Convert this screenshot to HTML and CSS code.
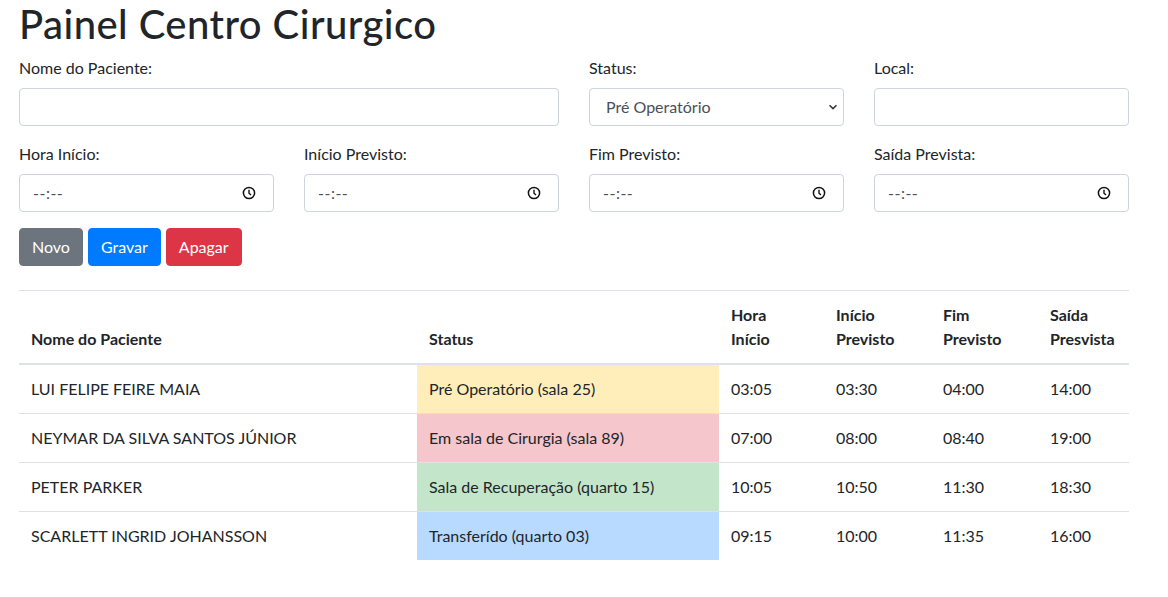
FILE: index.html
```html
<!DOCTYPE html>
<html lang="pt-BR">
<head>
<meta charset="utf-8">
<title>Painel Centro Cirurgico</title>
<link rel="stylesheet" href="styles.css">
</head>
<body>
<div class="container">
  <h1 class="title">Painel Centro Cirurgico</h1>
  <form class="form">
    <div class="form-row row-top">
      <div class="form-group">
        <label class="label">Nome do Paciente:</label>
        <div class="control"></div>
      </div>
      <div class="form-group">
        <label class="label">Status:</label>
        <div class="control select">
          <span>Pré Operatório</span>
          <svg class="chevron" width="10" height="8" viewBox="0 0 10 8"><path d="M1.5 2.2 L5 5.6 L8.5 2.2" fill="none" stroke="#343a40" stroke-width="1.6"/></svg>
        </div>
      </div>
      <div class="form-group">
        <label class="label">Local:</label>
        <div class="control"></div>
      </div>
    </div>
    <div class="form-row row-times">
      <div class="form-group">
        <label class="label">Hora Início:</label>
        <div class="control time"><span>--:--</span><svg class="clock" width="14" height="14" viewBox="0 0 14 14"><circle cx="7" cy="7" r="5.6" fill="none" stroke="#111" stroke-width="1.5"/><path d="M7 3.8 V7.2 L9 9" fill="none" stroke="#111" stroke-width="1.4"/></svg></div>
      </div>
      <div class="form-group">
        <label class="label">Início Previsto:</label>
        <div class="control time"><span>--:--</span><svg class="clock" width="14" height="14" viewBox="0 0 14 14"><circle cx="7" cy="7" r="5.6" fill="none" stroke="#111" stroke-width="1.5"/><path d="M7 3.8 V7.2 L9 9" fill="none" stroke="#111" stroke-width="1.4"/></svg></div>
      </div>
      <div class="form-group">
        <label class="label">Fim Previsto:</label>
        <div class="control time"><span>--:--</span><svg class="clock" width="14" height="14" viewBox="0 0 14 14"><circle cx="7" cy="7" r="5.6" fill="none" stroke="#111" stroke-width="1.5"/><path d="M7 3.8 V7.2 L9 9" fill="none" stroke="#111" stroke-width="1.4"/></svg></div>
      </div>
      <div class="form-group">
        <label class="label">Saída Prevista:</label>
        <div class="control time"><span>--:--</span><svg class="clock" width="14" height="14" viewBox="0 0 14 14"><circle cx="7" cy="7" r="5.6" fill="none" stroke="#111" stroke-width="1.5"/><path d="M7 3.8 V7.2 L9 9" fill="none" stroke="#111" stroke-width="1.4"/></svg></div>
      </div>
    </div>
    <div class="buttons">
      <button type="button" class="btn btn-secondary">Novo</button>
      <button type="button" class="btn btn-primary">Gravar</button>
      <button type="button" class="btn btn-danger">Apagar</button>
    </div>
  </form>
  <table class="table">
    <colgroup>
      <col class="c-nome"><col class="c-status"><col class="c-hora"><col class="c-inicio"><col class="c-fim"><col class="c-saida">
    </colgroup>
    <thead>
      <tr>
        <th>Nome do Paciente</th>
        <th>Status</th>
        <th>Hora<br>Início</th>
        <th>Início<br>Previsto</th>
        <th>Fim<br>Previsto</th>
        <th>Saída<br>Presvista</th>
      </tr>
    </thead>
    <tbody>
      <tr>
        <td>LUI FELIPE FEIRE MAIA</td>
        <td class="st-warning">Pré Operatório (sala 25)</td>
        <td>03:05</td><td>03:30</td><td>04:00</td><td>14:00</td>
      </tr>
      <tr>
        <td>NEYMAR DA SILVA SANTOS JÚNIOR</td>
        <td class="st-danger">Em sala de Cirurgia (sala 89)</td>
        <td>07:00</td><td>08:00</td><td>08:40</td><td>19:00</td>
      </tr>
      <tr>
        <td>PETER PARKER</td>
        <td class="st-success">Sala de Recuperação (quarto 15)</td>
        <td>10:05</td><td>10:50</td><td>11:30</td><td>18:30</td>
      </tr>
      <tr>
        <td>SCARLETT INGRID JOHANSSON</td>
        <td class="st-primary">Transferído (quarto 03)</td>
        <td>09:15</td><td>10:00</td><td>11:35</td><td>16:00</td>
      </tr>
    </tbody>
  </table>
</div>
</body>
</html>
```
FILE: styles.css
```css
* { box-sizing: border-box; }
body {
  margin: 0;
  font-family: Lato, "Open Sans", "Liberation Sans", sans-serif;
  font-size: 16px;
  line-height: 1.5;
  color: #212529;
  background: #fff;
}
.container {
  width: 1148px;
  padding: 0 19px;
}
.title {
  margin: 0 0 8px;
  font-size: 40px;
  font-weight: 500;
  line-height: 1.2;
  letter-spacing: 0.45px;
}
.form-row {
  display: grid;
  column-gap: 30px;
}
.row-top { grid-template-columns: 540px 255px 255px; }
.row-times { grid-template-columns: repeat(4, 255px); }
.form-group { margin-bottom: 16px; }
.label {
  display: block;
  margin-bottom: 8px;
  line-height: 24px;
}
.control {
  height: 38px;
  border: 1px solid #ced4da;
  border-radius: 4px;
  background: #fff;
  color: #495057;
}
.select {
  display: flex;
  align-items: center;
  justify-content: space-between;
  padding: 0 5px 0 16px;
}
.time {
  display: flex;
  align-items: center;
  justify-content: space-between;
  padding: 0 17px 0 13px;
  color: #495057;
  letter-spacing: 0.5px;
}
.buttons {
  display: flex;
  gap: 5px;
  margin-bottom: 24px;
}
.btn {
  height: 38px;
  padding: 6px 12px;
  border: 1px solid transparent;
  border-radius: 4px;
  font: inherit;
  color: #fff;
  line-height: 24px;
}
.btn-secondary { background: #6c757d; border-color: #6c757d; }
.btn-primary { background: #007bff; border-color: #007bff; }
.btn-danger { background: #dc3545; border-color: #dc3545; }
.table {
  width: 1110px;
  border-collapse: collapse;
  table-layout: fixed;
}
.c-nome { width: 398px; }
.c-status { width: 302px; }
.c-hora { width: 105px; }
.c-inicio { width: 107px; }
.c-fim { width: 107px; }
.c-saida { width: 91px; }
.table th, .table td {
  padding: 12px;
  border-top: 1px solid #dee2e6;
  text-align: left;
  vertical-align: top;
}
.table th {
  font-weight: 700;
  vertical-align: bottom;
  border-bottom: 2px solid #dee2e6;
}
.st-warning { background: #ffeeba; }
.st-danger { background: #f5c6cb; }
.st-success { background: #c3e6cb; }
.st-primary { background: #b8daff; }
```
